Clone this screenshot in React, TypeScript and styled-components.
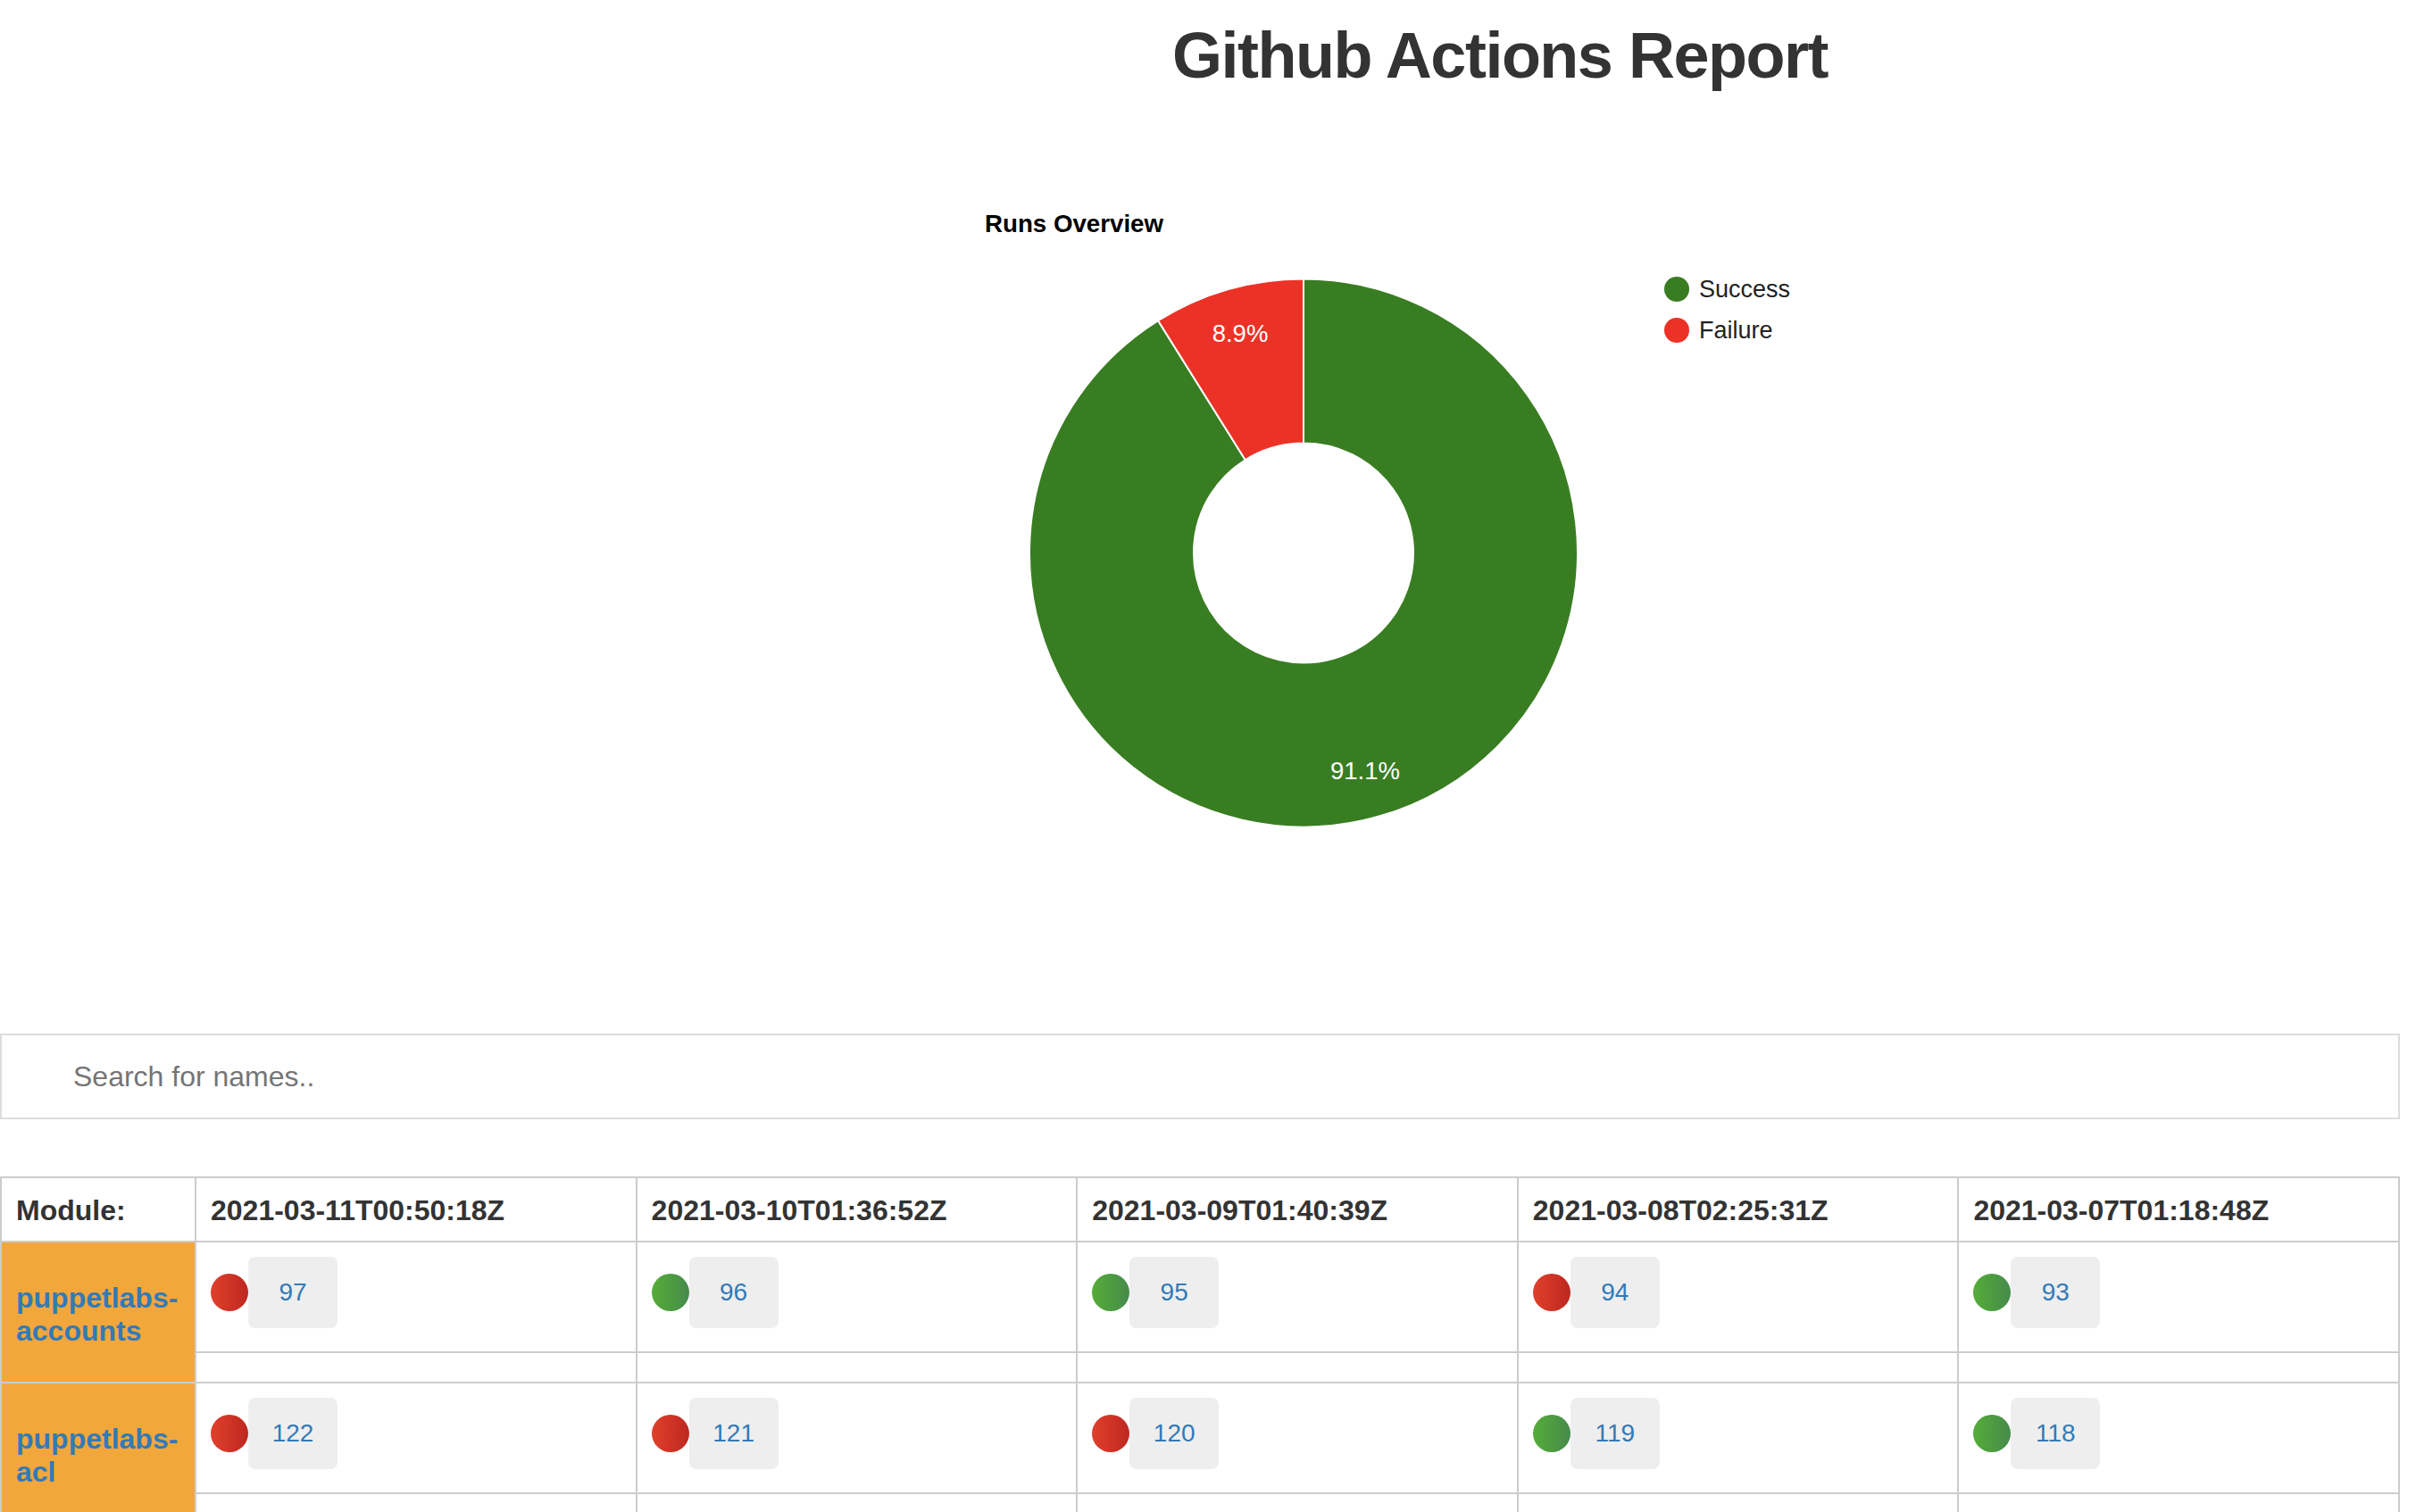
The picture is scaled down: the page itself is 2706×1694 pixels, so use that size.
import React from 'react';
import styled, { createGlobalStyle } from 'styled-components';

type Status = 'success' | 'failure';

interface Run {
  id: number;
  status: Status;
}

interface ModuleRow {
  name: string;
  runs: Run[];
}

const DATES = [
  '2021-03-11T00:50:18Z',
  '2021-03-10T01:36:52Z',
  '2021-03-09T01:40:39Z',
  '2021-03-08T02:25:31Z',
  '2021-03-07T01:18:48Z',
];

const MODULES: ModuleRow[] = [
  {
    name: 'puppetlabs-accounts',
    runs: [
      { id: 97, status: 'failure' },
      { id: 96, status: 'success' },
      { id: 95, status: 'success' },
      { id: 94, status: 'failure' },
      { id: 93, status: 'success' },
    ],
  },
  {
    name: 'puppetlabs-acl',
    runs: [
      { id: 122, status: 'failure' },
      { id: 121, status: 'failure' },
      { id: 120, status: 'failure' },
      { id: 119, status: 'success' },
      { id: 118, status: 'success' },
    ],
  },
];

const GlobalStyle = createGlobalStyle`
  body {
    margin: 0;
    background: #fff;
    color: #333;
    font-family: "Liberation Sans", Arial, Helvetica, sans-serif;
  }
`;

const Page = styled.div`
  width: 2688px;
`;

const Title = styled.h1`
  margin: 23px 0 4px 25%;
  font-size: 72px;
  line-height: 79px;
  font-weight: 700;
  letter-spacing: -1.5px;
  text-align: center;
  color: #333;
`;

const ChartSvg = styled.svg`
  display: block;
  width: 2688px;
  height: 1020px;
  font-family: "Liberation Sans", Arial, sans-serif;
`;

const SearchInput = styled.input`
  display: block;
  box-sizing: border-box;
  width: 100%;
  height: 96px;
  margin: 32px 0 64px;
  padding: 0 20px 0 80px;
  border: 2px solid #ddd;
  font-family: inherit;
  font-size: 32px;
  color: #333;
  outline: none;

  &::placeholder {
    color: #757575;
  }
`;

const Table = styled.table`
  width: 100%;
  table-layout: fixed;
  border-collapse: separate;
  border-spacing: 0;
  border-top: 2px solid #ccc;
  border-left: 2px solid #ccc;
`;

const HeadCell = styled.th`
  padding: 2px 16px 0;
  height: 68px;
  text-align: left;
  font-size: 32px;
  font-weight: 700;
  color: #333;
  border-right: 2px solid #ccc;
  border-bottom: 2px solid #ccc;
  white-space: nowrap;
`;

const ModuleCell = styled.td`
  padding: 6px 16px 0;
  background: #f2a73c;
  vertical-align: middle;
  border-right: 2px solid #ccc;
  border-bottom: 2px solid #ccc;
`;

const ModuleName = styled.span`
  font-size: 32px;
  font-weight: 700;
  color: #337ab7;
  line-height: 37px;
`;

const RunCell = styled.td`
  padding: 16px 16px 26px;
  vertical-align: top;
  border-right: 2px solid #ccc;
  border-bottom: 2px solid #ccc;
`;

const SpacerCell = styled.td`
  padding: 0;
  height: 32px;
  border-right: 2px solid #ccc;
  border-bottom: 2px solid #ccc;
`;

const RunLine = styled.div`
  display: flex;
  align-items: center;
  height: 80px;
`;

const Dot = styled.span<{ $status: Status }>`
  flex: none;
  width: 42px;
  height: 42px;
  border-radius: 50%;
  background: ${props =>
    props.$status === 'success'
      ? 'linear-gradient(to right, #55ad38, #468a4b)'
      : 'linear-gradient(to right, #e0402c, #bd2820)'};
`;

const RunBadge = styled.span`
  display: flex;
  align-items: center;
  justify-content: center;
  width: 100px;
  height: 80px;
  border-radius: 8px;
  background: #eee;
  color: #337ab7;
  font-size: 28px;
`;

// donut geometry, page pixels (svg sits 106px below the top)
const CX = 1460;
const CY = 513.5;
const OUTER = 307;
const INNER = 123;

const polar = (r: number, deg: number) => {
  const a = (deg * Math.PI) / 180;
  return [CX + r * Math.sin(a), CY - r * Math.cos(a)];
};

const slicePath = (from: number, to: number) => {
  const large = to - from > 180 ? 1 : 0;
  const [x1, y1] = polar(OUTER, from);
  const [x2, y2] = polar(OUTER, to);
  const [x3, y3] = polar(INNER, to);
  const [x4, y4] = polar(INNER, from);
  return `M${x1} ${y1} A${OUTER} ${OUTER} 0 ${large} 1 ${x2} ${y2} L${x3} ${y3} A${INNER} ${INNER} 0 ${large} 0 ${x4} ${y4} Z`;
};

const RunsChart: React.FC = () => {
  const successDeg = 0.911 * 360;
  return (
    <ChartSvg viewBox="0 0 2688 1020">
      <text x={1103} y={154} fontSize={27.7} fontWeight={700} fill="#000">
        Runs Overview
      </text>
      <path d={slicePath(0, successDeg)} fill="#397d22" stroke="#fff" strokeWidth={2} />
      <path d={slicePath(successDeg, 360)} fill="#ec3226" stroke="#fff" strokeWidth={2} />
      <text x={1389} y={277} fontSize={27.5} fill="#fff" textAnchor="middle">
        8.9%
      </text>
      <text x={1529} y={767} fontSize={27.5} fill="#fff" textAnchor="middle">
        91.1%
      </text>
      <circle cx={1878} cy={218} r={14} fill="#397d22" />
      <text x={1903} y={227} fontSize={27} fill="#222">
        Success
      </text>
      <circle cx={1878} cy={264} r={14} fill="#ec3226" />
      <text x={1903} y={273} fontSize={27} fill="#222">
        Failure
      </text>
    </ChartSvg>
  );
};

const App: React.FC = () => {
  return (
    <Page>
      <GlobalStyle />
      <Title>Github Actions Report</Title>
      <RunsChart />
      <SearchInput type="text" placeholder="Search for names.." />
      <Table>
        <colgroup>
          <col style={{ width: 218 }} />
          {DATES.map(d => (
            <col key={d} />
          ))}
        </colgroup>
        <thead>
          <tr>
            <HeadCell>Module:</HeadCell>
            {DATES.map(d => (
              <HeadCell key={d}>{d}</HeadCell>
            ))}
          </tr>
        </thead>
        <tbody>
          {MODULES.map(mod => (
            <React.Fragment key={mod.name}>
              <tr>
                <ModuleCell rowSpan={2}>
                  <ModuleName>{mod.name}</ModuleName>
                </ModuleCell>
                {mod.runs.map(run => (
                  <RunCell key={run.id}>
                    <RunLine>
                      <Dot $status={run.status} />
                      <RunBadge>{run.id}</RunBadge>
                    </RunLine>
                  </RunCell>
                ))}
              </tr>
              <tr>
                {mod.runs.map(run => (
                  <SpacerCell key={run.id} />
                ))}
              </tr>
            </React.Fragment>
          ))}
        </tbody>
      </Table>
    </Page>
  );
};

export default App;
